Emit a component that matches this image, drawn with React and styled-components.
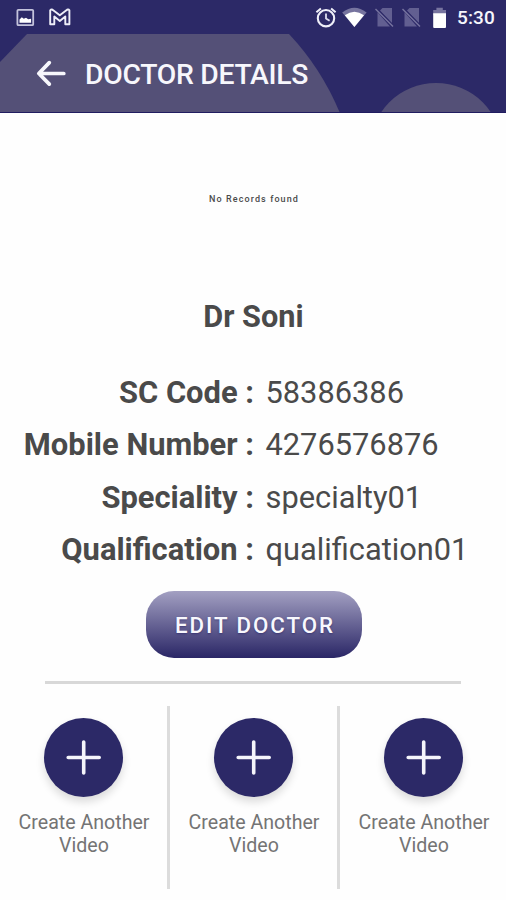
import React from 'react'
import styled, { createGlobalStyle } from 'styled-components'

const GlobalStyle = createGlobalStyle`
    * {
        box-sizing: border-box;
    }
    body {
        margin: 0;
        background: #fefefe;
        font-family: Roboto, "Liberation Sans", sans-serif;
        color: #4a4a4a;
    }
`
const Screen = styled.div`
    width: 506px;
    height: 900px;
    display: flex;
    flex-direction: column;
    overflow: hidden;
`
const StatusBar = styled.div`
    height: 34px;
    flex: none;
    background: #2c2967;
    display: flex;
    justify-content: space-between;
    & svg {
        display: block;
    }
`
const Clock = styled.span`
    width: 49px;
    color: #f6f6fc;
    font-size: 19px;
    font-weight: 500;
    line-height: 36px;
    letter-spacing: 0.1px;
`
const StatusIcons = styled.div`
    display: flex;
`
const Header = styled.header`
    position: relative;
    height: 79px;
    flex: none;
    display: flex;
    align-items: center;
    background: #2c2967;
    border-bottom: 1px solid #201c60;
`
const HeaderShapes = styled.svg`
    position: absolute;
    top: 0;
    left: 0;
`
const BackButton = styled.button`
    position: relative;
    border: none;
    background: none;
    padding: 0;
    margin-left: 35px;
    height: 30px;
    cursor: pointer;
    & svg {
        display: block;
    }
`
const Title = styled.h1`
    position: relative;
    margin: 3px 0 0 18px;
    color: #f7f7fc;
    font-size: 28.3px;
    line-height: 34px;
    font-weight: 500;
    letter-spacing: -0.28px;
`
const Empty = styled.p`
    margin: 80px 0 0;
    padding-left: 2px;
    text-align: center;
    font-size: 9px;
    line-height: 12px;
    letter-spacing: 1.1px;
    font-weight: 500;
`
const Name = styled.h2`
    margin: 92px 0 0;
    padding-left: 1px;
    text-align: center;
    font-size: 30.7px;
    line-height: 40px;
    font-weight: 700;
`
const Details = styled.dl`
    display: grid;
    grid-template-columns: 254px 1fr;
    grid-auto-rows: 52.5px;
    align-items: center;
    column-gap: 11.5px;
    margin: 29px 0 0;
    font-size: 30.8px;
`
const Label = styled.dt`
    text-align: right;
    font-size: 30.9px;
    font-weight: 700;
    white-space: nowrap;
`
const Value = styled.dd`
    margin: 0;
    white-space: nowrap;
`
const EditButton = styled.button`
    align-self: center;
    width: 216px;
    height: 67px;
    flex: none;
    margin: 15px 0 0 2px;
    padding: 1px 0 0 2px;
    border: none;
    border-radius: 28px;
    background: linear-gradient(#a3a0c2, #2a2666);
    color: #f8f8fd;
    font-family: inherit;
    font-size: 22.3px;
    font-weight: 500;
    letter-spacing: 1.95px;
    text-shadow: 0 1px 2px rgba(32, 28, 96, 0.5);
    cursor: pointer;
`
const Divider = styled.hr`
    width: 416px;
    height: 3px;
    flex: none;
    margin: 23px auto 0 45px;
    border: none;
    background: #d8d8d8;
`
const Actions = styled.div`
    display: grid;
    grid-template-columns: 170px 170px 166px;
    height: 183px;
    margin-top: 22px;
`
const Action = styled.div`
    display: flex;
    flex-direction: column;
    align-items: center;
    padding-top: 11.5px;
    padding-left: ${props => props.$shift || 0}px;
    border-right: ${props => (props.$last ? 'none' : '3px solid #dcdcdc')};
`
const AddButton = styled.button`
    width: 79px;
    height: 79px;
    padding: 0;
    border: none;
    border-radius: 50%;
    background: #2c2967;
    box-shadow: 0 5px 8px rgba(0, 0, 0, 0.14);
    cursor: pointer;
    & svg {
        display: block;
    }
`
const Caption = styled.span`
    margin-top: 14.5px;
    width: 141px;
    padding-left: 1px;
    text-align: center;
    color: #747474;
    font-size: 19.6px;
    line-height: 23px;
`

const details = [
    { label: 'SC Code :', value: '58386386' },
    { label: 'Mobile Number :', value: '4276576876' },
    { label: 'Speciality :', value: 'specialty01' },
    { label: 'Qualification :', value: 'qualification01' }
]

const NotificationIcons = () => (
    <svg width="90" height="34" viewBox="0 0 90 34" fill="none">
        <rect x="17.4" y="9.8" width="15.8" height="15.4" rx="1" stroke="#c4c3dc" strokeWidth="1.8" />
        <path d="M19.5 22.8v-3.4l2.3-2.2 2 1.5 2.2-1 2.2 1.6 2.9-.6v4.1z" fill="#fff" />
        <path
            d="M50.2 10.3c1-1.2 2.2-.8 3 0l6.6 5 6.6-5c.8-.8 2.2-1.2 3 0v13.9h-4.1v-7.7L59.8 21l-5.5-4.5v7.7h-4.1z"
            stroke="#eeeef8"
            strokeWidth="1.9"
            strokeLinejoin="round"
        />
    </svg>
)

const NoSim = ({ x }) => (
    <g transform={`translate(${x} 8)`}>
        <path d="M6.5 0H16v15L4 2.5z" fill="#625f91" />
        <path d="M1.5 4.2L14 18.5H1.5z" fill="#625f91" />
        <path d="M.4 .6L17.6 17.9" stroke="#2c2967" strokeWidth="1.2" />
        <path d="M-.5 1L17 18.5" stroke="#77749f" strokeWidth="1.4" />
    </g>
)

const SystemIcons = () => (
    <svg width="147" height="34" viewBox="310 0 147 34" fill="none">
        <circle cx="326" cy="18.2" r="8.2" stroke="#efeff9" strokeWidth="2.1" />
        <path d="M326 13.4v5.1l3.6 2.3" stroke="#dcdcef" strokeWidth="1.8" />
        <path d="M316.4 12.3l4.5-3.8M335.6 12.3l-4.5-3.8" stroke="#efeff9" strokeWidth="2" />
        <path d="M342.2 12.4q12.2-9.4 24.4 0L354.4 27z" fill="#77749f" />
        <path d="M344.8 15.3q9.6-7 19.2 0L354.4 27z" fill="#fff" />
        <NoSim x={376} />
        <NoSim x={403} />
        <path d="M433.2 10h3.2V7.8h6.4V10h3.2v5h-12.8z" fill="#77749f" />
        <path d="M433.2 13.2H446V27a1 1 0 0 1-1 1h-10.8a1 1 0 0 1-1-1z" fill="#fff" />
    </svg>
)

const AddVideo = ({ shift, last }) => (
    <Action $shift={shift} $last={last}>
        <AddButton aria-label="Create another video">
            <svg width="79" height="79" viewBox="0 0 79 79">
                <path d="M39.7 24v31M24.2 39.5h31" stroke="#f5f5fb" strokeWidth="3.6" strokeLinecap="round" />
            </svg>
        </AddButton>
        <Caption>Create Another Video</Caption>
    </Action>
)

const App = () => {
    return (
        <Screen>
            <GlobalStyle />
            <StatusBar>
                <NotificationIcons />
                <StatusIcons>
                    <SystemIcons />
                    <Clock>5:30</Clock>
                </StatusIcons>
            </StatusBar>
            <Header>
                <HeaderShapes width="506" height="78" viewBox="0 34 506 78">
                    <path d="M0 62L27 34H289Q321 68 339.5 112H0z" fill="#545077" />
                    <circle cx="436" cy="149" r="66" fill="#545077" />
                </HeaderShapes>
                <BackButton aria-label="Back">
                    <svg width="32" height="30" viewBox="0 0 32 30" fill="none">
                        <path
                            d="M28.8 15.5H4M14.3 4.6L3.8 15.5l10.5 10.6"
                            stroke="#f7f7fc"
                            strokeWidth="3.7"
                            strokeLinecap="round"
                            strokeLinejoin="round"
                        />
                    </svg>
                </BackButton>
                <Title>DOCTOR DETAILS</Title>
            </Header>
            <Empty>No Records found</Empty>
            <Name>Dr Soni</Name>
            <Details>
                {details.map(item => (
                    <React.Fragment key={item.label}>
                        <Label>{item.label}</Label>
                        <Value>{item.value}</Value>
                    </React.Fragment>
                ))}
            </Details>
            <EditButton>EDIT DOCTOR</EditButton>
            <Divider />
            <Actions>
                <AddVideo />
                <AddVideo />
                <AddVideo shift={1} last />
            </Actions>
        </Screen>
    )
}

export default App
